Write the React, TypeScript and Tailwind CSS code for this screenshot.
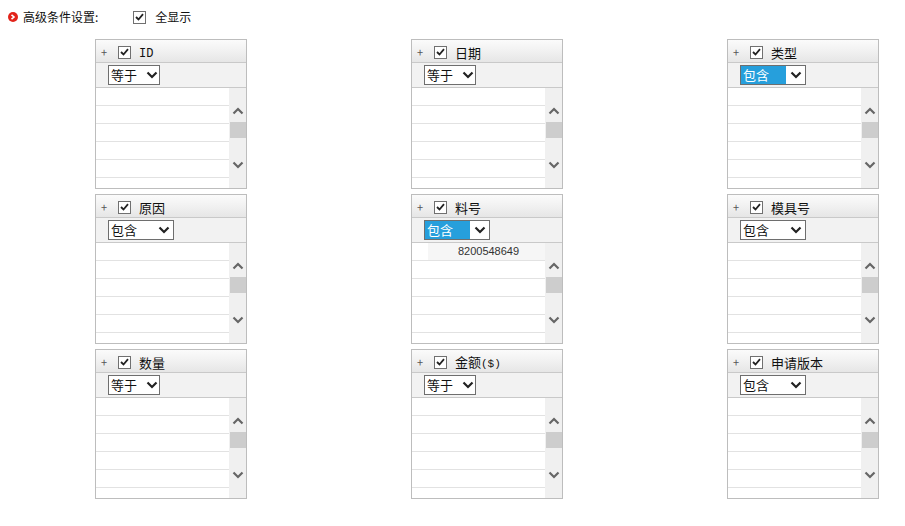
import type { ReactNode } from "react";

type Panel = {
  label: ReactNode;
  op: "等于" | "包含";
  active?: boolean;
  values?: string[];
};

const panels: Panel[] = [
  { label: <span className="font-['Liberation_Mono',monospace] text-[12px]">ID</span>, op: "等于" },
  { label: "日期", op: "等于" },
  { label: "类型", op: "包含", active: true },
  { label: "原因", op: "包含" },
  { label: "料号", op: "包含", active: true, values: ["8200548649"] },
  { label: "模具号", op: "包含" },
  { label: "数量", op: "等于" },
  {
    label: (
      <span>
        金额<span className="font-['Liberation_Mono',monospace] text-[11px]">($)</span>
      </span>
    ),
    op: "等于",
  },
  { label: "申请版本", op: "包含" },
];

function Check() {
  return (
    <span className="flex h-[13px] w-[13px] items-center justify-center border border-[#707070] bg-white">
      <svg width="9" height="8" viewBox="0 0 9 8">
        <path d="M1 4 L3.5 6.5 L8 1.2" fill="none" stroke="#222" strokeWidth="1.8" />
      </svg>
    </span>
  );
}

function Chevron({ up, color = "#222" }: { up?: boolean; color?: string }) {
  return (
    <svg width="12" height="8" viewBox="0 0 12 8">
      <path
        d={up ? "M1.5 6.5 L6 2 L10.5 6.5" : "M1.5 1.5 L6 6 L10.5 1.5"}
        fill="none"
        stroke={color}
        strokeWidth="2.2"
      />
    </svg>
  );
}

function OpSelect({ op, active }: { op: string; active?: boolean }) {
  const wide = op === "包含";
  return (
    <div
      className={`flex h-[20px] items-center border border-[#6e6e6e] bg-white ${
        wide ? "w-[66px]" : "w-[52px]"
      }`}
    >
      <span
        className={`flex h-full items-center pb-[2px] pl-[2px] text-[13px] leading-none ${
          active ? "bg-[#269fdc] text-white" : "text-[#111]"
        } ${wide ? "w-[45px]" : "w-[36px]"}`}
      >
        {op}
      </span>
      <span className="flex flex-1 items-center justify-center">
        <Chevron />
      </span>
    </div>
  );
}

function FilterPanel({ p }: { p: Panel }) {
  const rows = [0, 1, 2, 3, 4, 5];
  return (
    <div className="flex h-[150px] w-[152px] flex-col border border-[#bdbdbd] bg-white">
      <div className="flex h-[23px] items-center border-b border-[#c9c9c9] bg-gradient-to-b from-[#fbfbfb] via-[#f1f1f1] to-[#e6e6e6] pt-[2px]">
        <span className="ml-[5px] w-[17px] text-[11px] leading-none text-[#555]">+</span>
        <Check />
        <span className="ml-[8px] text-[13px] leading-none text-[#111]">{p.label}</span>
      </div>
      <div className="h-[25px] border-b border-[#c9c9c9] bg-[#f2f2f2] pl-[12px] pt-[2px]">
        <OpSelect op={p.op} active={p.active} />
      </div>
      <div className="flex flex-1 overflow-hidden">
        <div className="flex-1">
          {rows.map((r) => (
            <div key={r} className="h-[18px] border-b border-[#e2e2e2] pl-[16px]">
              {p.values?.[r] && (
                <div className="flex h-full items-center justify-center bg-[#f6f6f6] pl-[4px] font-['Liberation_Sans',sans-serif] text-[11px] text-[#333]">
                  {p.values[r]}
                </div>
              )}
            </div>
          ))}
        </div>
        <div className="flex w-[17px] flex-col items-center bg-[#f0f0f0]">
          <div className="mt-[19px]">
            <Chevron up color="#666" />
          </div>
          <div className="ml-[1px] mt-[7px] h-[16px] w-[16px] bg-[#cdcdcd]" />
          <div className="mt-[23px]">
            <Chevron color="#666" />
          </div>
        </div>
      </div>
    </div>
  );
}

export default function App() {
  return (
    <div className="min-h-[526px] bg-white font-['Noto_Sans_CJK_SC',sans-serif] text-[#111]">
      <div className="mb-[5px] flex h-[34px] items-center pl-[8px]">
        <span className="flex h-[10px] w-[10px] items-center justify-center rounded-full bg-[#e2231a]">
          <svg width="6" height="6" viewBox="0 0 6 6">
            <path d="M1.5 0.8 L4 3 L1.5 5.2" fill="none" stroke="#fff" strokeWidth="1.6" />
          </svg>
        </span>
        <span className="ml-[5px] text-[12px] leading-none">高级条件设置:</span>
        <span className="ml-[35px]">
          <Check />
        </span>
        <span className="ml-[9px] text-[12px] leading-none">全显示</span>
      </div>
      <div className="ml-[95px] grid grid-cols-[152px_152px_152px] gap-x-[164px] gap-y-[5px]">
        {panels.map((p, i) => (
          <FilterPanel key={i} p={p} />
        ))}
      </div>
    </div>
  );
}
